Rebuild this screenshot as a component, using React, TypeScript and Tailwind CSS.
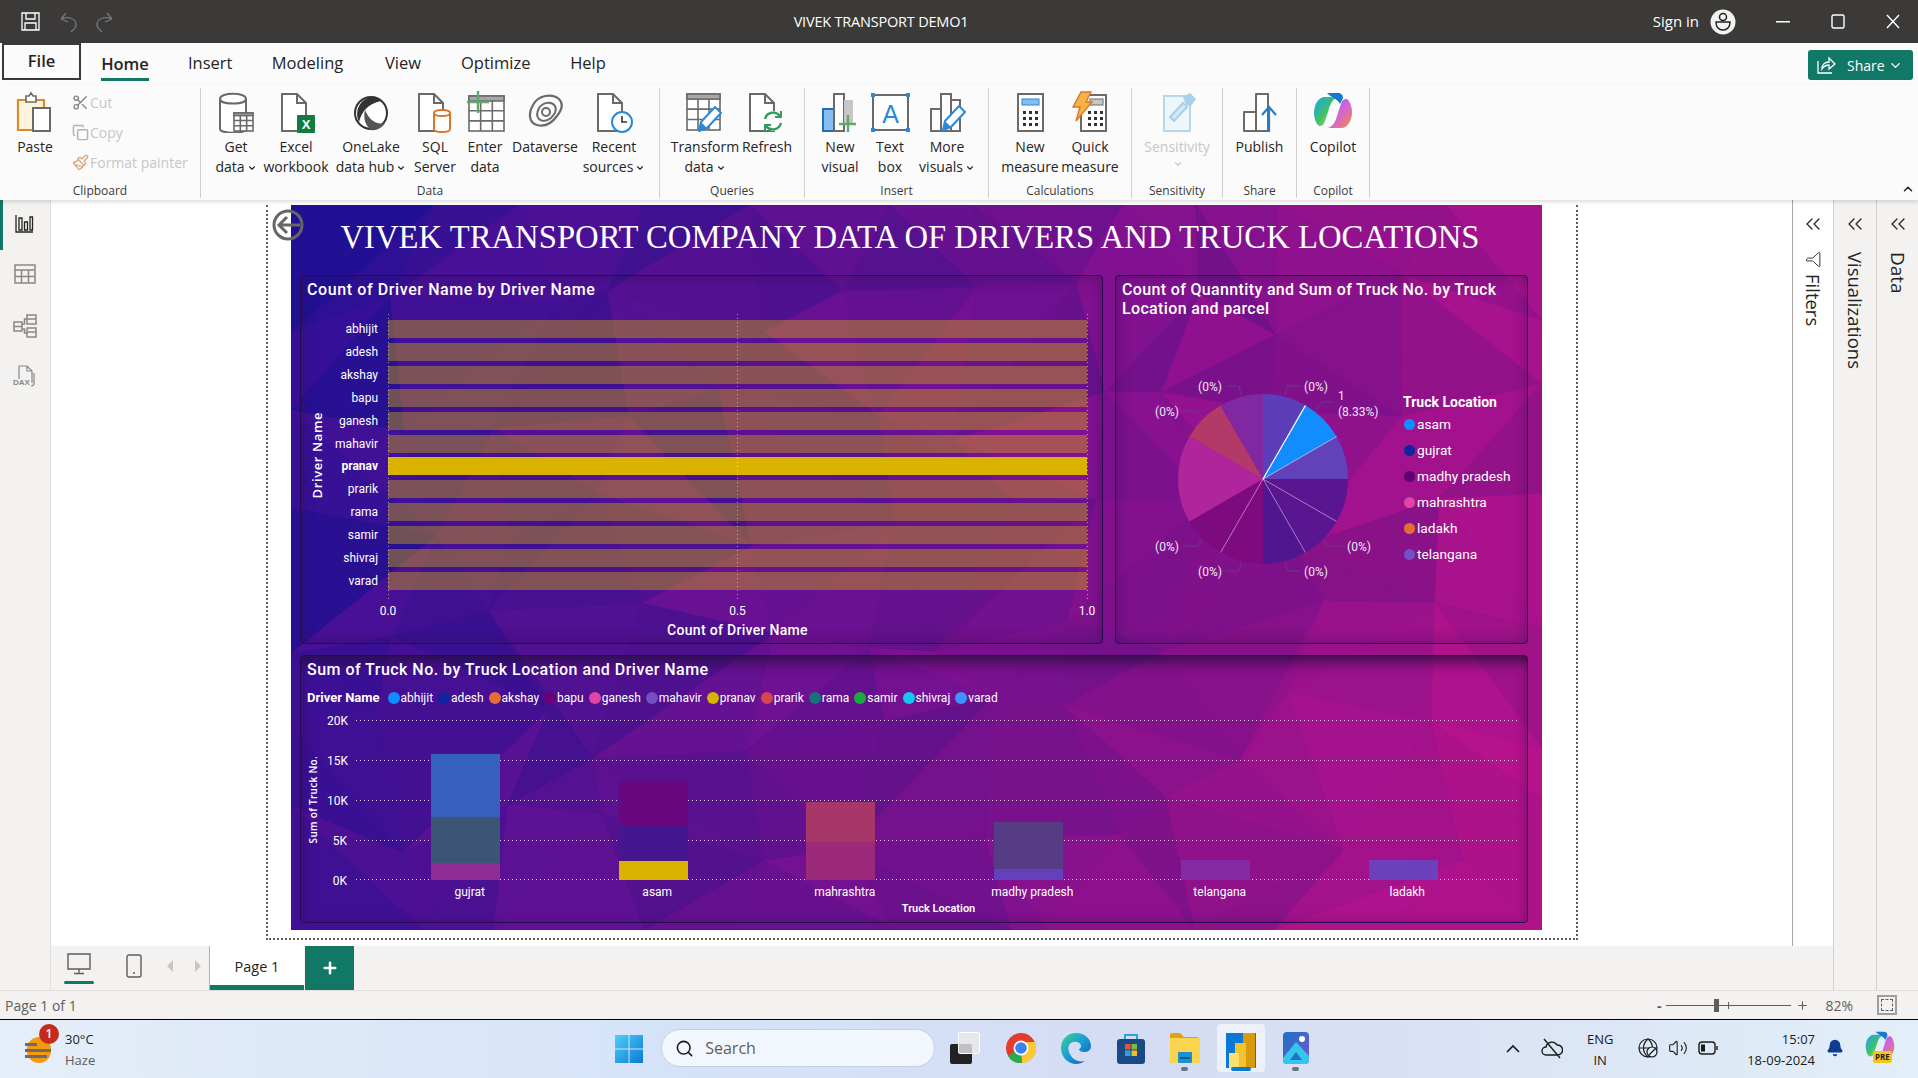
import { ChevronDown, ChevronUp, ChevronsLeft, Funnel, Search, Plus, Volume2, Bell, Scissors, Copy, Paintbrush } from 'lucide-react';
import type { ReactNode } from 'react';

// low poly backdrop of the report page
const W = 1251;
const H = 725;

function rng(seed: number) {
  let a = seed;
  return () => {
    a = (a + 0x6d2b79f5) | 0;
    let t = Math.imul(a ^ (a >>> 15), 1 | a);
    t = (t + Math.imul(t ^ (t >>> 7), 61 | t)) ^ t;
    return ((t ^ (t >>> 14)) >>> 0) / 4294967296;
  };
}

function polyColor(x: number, y: number, n: number) {
  const t = Math.min(1, Math.max(0, (x / W) * 0.85 + (y / H) * 0.15));
  const r = 40 + t * 135 + n * 30;
  const g = 16 + t * 2;
  const b = 150 - t * 14 + n * 6;
  return `rgb(${Math.round(r)},${Math.round(g)},${Math.round(b)})`;
}

function buildPolys() {
  const r = rng(41);
  const cols = 11;
  const rows = 7;
  const pts: [number, number][][] = [];
  for (let j = 0; j <= rows; j++) {
    const row: [number, number][] = [];
    for (let i = 0; i <= cols; i++) {
      const edgeX = i === 0 || i === cols;
      const edgeY = j === 0 || j === rows;
      row.push([
        (i / cols) * W + (edgeX ? 0 : (r() - 0.5) * 85),
        (j / rows) * H + (edgeY ? 0 : (r() - 0.5) * 75),
      ]);
    }
    pts.push(row);
  }
  const out: { p: string; c: string }[] = [];
  for (let j = 0; j < rows; j++) {
    for (let i = 0; i < cols; i++) {
      const a = pts[j][i];
      const b = pts[j][i + 1];
      const c = pts[j + 1][i];
      const d = pts[j + 1][i + 1];
      const tris = r() > 0.5 ? [[a, b, c], [b, d, c]] : [[a, b, d], [a, d, c]];
      for (const t of tris) {
        const cx = (t[0][0] + t[1][0] + t[2][0]) / 3;
        const cy = (t[0][1] + t[1][1] + t[2][1]) / 3;
        out.push({ p: t.map((q) => q.join(',')).join(' '), c: polyColor(cx, cy, r() - 0.5) });
      }
    }
  }
  return out;
}

const polys = buildPolys();

const drivers = ['abhijit', 'adesh', 'akshay', 'bapu', 'ganesh', 'mahavir', 'pranav', 'prarik', 'rama', 'samir', 'shivraj', 'varad'];

const driverLegend = [
  { n: 'abhijit', c: '#118dff' },
  { n: 'adesh', c: '#12239e' },
  { n: 'akshay', c: '#e66c37' },
  { n: 'bapu', c: '#6b007b' },
  { n: 'ganesh', c: '#e044a7' },
  { n: 'mahavir', c: '#744ec2' },
  { n: 'pranav', c: '#d9b300' },
  { n: 'prarik', c: '#d64550' },
  { n: 'rama', c: '#197278' },
  { n: 'samir', c: '#1aab40' },
  { n: 'shivraj', c: '#15c6f4' },
  { n: 'varad', c: '#4092ff' },
];

const truckLegend = [
  { n: 'asam', c: '#118dff' },
  { n: 'gujrat', c: '#12239e' },
  { n: 'madhy pradesh', c: '#5c0072' },
  { n: 'mahrashtra', c: '#e044a7' },
  { n: 'ladakh', c: '#e66c37' },
  { n: 'telangana', c: '#744ec2' },
];

const pieColors = ['#5c3fb8', '#118dff', '#6142bb', '#5a1690', '#5a1690', '#4f1690', '#7e0a80', '#7e0a80', '#b0259b', '#b0259b', '#b33a68', '#8028a2'];

const stacks = [
  { name: 'gujrat', parts: [{ h: 63, c: '#3560bd' }, { h: 46, c: '#3c5575' }, { h: 17, c: '#8f2c96' }] },
  { name: 'asam', parts: [{ h: 44, c: '#680780' }, { h: 36, c: '#45168f' }, { h: 19, c: '#d9b300' }] },
  { name: 'mahrashtra', parts: [{ h: 40, c: '#a73668' }, { h: 38, c: '#9c2a7a' }] },
  { name: 'madhy pradesh', parts: [{ h: 47, c: '#553c85' }, { h: 11, c: '#6540bb' }] },
  { name: 'telangana', parts: [{ h: 20, c: '#842ba3' }] },
  { name: 'ladakh', parts: [{ h: 20, c: '#6d41bc' }] },
];

function slicePath(i: number) {
  const cx = 1263;
  const cy = 480;
  const r = 85;
  const a0 = (i * 30 * Math.PI) / 180;
  const a1 = ((i + 1) * 30 * Math.PI) / 180;
  return `M${cx} ${cy} L${cx + r * Math.sin(a0)} ${cy - r * Math.cos(a0)} A${r} ${r} 0 0 1 ${cx + r * Math.sin(a1)} ${cy - r * Math.cos(a1)} Z`;
}

function spoke(deg: number) {
  const a = (deg * Math.PI) / 180;
  return { x2: 1263 + 85 * Math.sin(a), y2: 480 - 85 * Math.cos(a) };
}

/* ---------- ribbon icons ---------- */
const G = '#6b6a69';

function Ico({ children, w = 40 }: { children: ReactNode; w?: number }) {
  return (
    <svg width={w} height="42" viewBox={`0 0 ${w} 42`} fill="none">
      {children}
    </svg>
  );
}

const Doc = ({ x = 8 }: { x?: number }) => (
  <path d={`M${x} 3h15l9 9v28h-24zM${x + 15} 3v9h9`} stroke={G} strokeWidth="2" fill="#fff" />
);

const TableGrid = ({ x, y, w, h, head = true }: { x: number; y: number; w: number; h: number; head?: boolean }) => (
  <g stroke={G} strokeWidth="1.6" fill="#fff">
    <rect x={x} y={y} width={w} height={h} />
    {head && <rect x={x} y={y} width={w} height={h / 7} fill="#a8a7a6" />}
    <path d={`M${x + w / 3} ${y + h / 7}V${y + h}M${x + (2 * w) / 3} ${y + h / 7}V${y + h}M${x} ${y + h * 0.42}H${x + w}M${x} ${y + h * 0.71}H${x + w}`} />
  </g>
);

const Pencil = ({ dx = 0, dy = 0 }: { dx?: number; dy?: number }) => (
  <g transform={`translate(${dx} ${dy})`}>
    <path d="M14 38l2-9L30 14l6 6L22 35z" fill="#fff" stroke="#2b88d8" strokeWidth="2" strokeLinejoin="round" />
    <path d="M14 38l2-9 6 6z" fill="#2b88d8" />
  </g>
);

const icons: Record<string, ReactNode> = {
  paste: (
    <Ico>
      <path d="M3 9h26v30H3z" fill="#fdf3dc" stroke="#d98a2b" strokeWidth="2.2" />
      <path d="M11 5h3l2-3 2 3h3v6H11z" fill="#fff" stroke={G} strokeWidth="1.6" />
      <rect x="18" y="17" width="17" height="23" fill="#fff" stroke={G} strokeWidth="2" />
    </Ico>
  ),
  get: (
    <Ico>
      <path d="M4 8c0-7 26-7 26 0v30c0 5-26 5-26 0z" fill="#fff" stroke={G} strokeWidth="2" />
      <path d="M4 8c0 6 26 6 26 0" stroke={G} strokeWidth="2" />
      <TableGrid x={18} y={22} w={19} h={18} />
    </Ico>
  ),
  excel: (
    <Ico>
      <Doc x={6} />
      <rect x="21" y="24" width="18" height="18" rx="1" fill="#107c41" />
      <text x="30" y="38" fontSize="13" fontWeight="700" fill="#fff" textAnchor="middle" fontFamily="Liberation Sans">X</text>
    </Ico>
  ),
  onelake: (
    <Ico>
      <circle cx="20" cy="22" r="16" fill="#fff" stroke="#333" strokeWidth="2" />
      <path d="M20 6C9 8 3 20 8 31c3-11 9-18 22-21C27 6 24 5 20 6z" fill="#333" />
      <path d="M14 19c4 9 10 15 20 13-3 5-9 8-14 7-6-5-8-12-6-20z" fill="#555" />
    </Ico>
  ),
  sql: (
    <Ico>
      <Doc x={4} />
      <path d="M19 22c0-4 16-4 16 0v16c0 4-16 4-16 0z" fill="#fff" stroke="#d9782b" strokeWidth="2" />
      <path d="M19 22c0 4 16 4 16 0" stroke="#d9782b" strokeWidth="2" />
    </Ico>
  ),
  enter: (
    <Ico>
      <TableGrid x={4} y={5} w={35} h={35} />
      <path d="M13 0v22M2 11h22" stroke="#5fa86b" strokeWidth="2.4" />
    </Ico>
  ),
  dataverse: (
    <Ico>
      <path d="M8 14c5-10 19-12 26-6 5 5 2 12-2 17-5 7-12 11-20 9C4 32 3 22 8 14z" stroke={G} strokeWidth="2.2" />
      <path d="M14 17c4-6 13-7 16-2 2 4-1 9-4 12-4 3-9 4-12 1-3-3-2-7 0-11z" stroke={G} strokeWidth="2" />
      <circle cx="21" cy="21" r="4" stroke={G} strokeWidth="2" />
    </Ico>
  ),
  recent: (
    <Ico>
      <Doc x={4} />
      <circle cx="28" cy="31" r="10" fill="#fff" stroke="#2b88d8" strokeWidth="2" />
      <path d="M28 25v6h5" stroke="#333" strokeWidth="1.6" />
    </Ico>
  ),
  transform: (
    <Ico>
      <TableGrid x={2} y={3} w={33} h={36} />
      <Pencil dx={0} dy={2} />
    </Ico>
  ),
  refresh: (
    <Ico>
      <Doc x={3} />
      <circle cx="26" cy="30" r="10" fill="#fff" />
      <path d="M18 28a8.500 8.500 0 0 1 15-3M34 32a8.500 8.500 0 0 1-15 3" stroke="#2e9e5b" strokeWidth="2.4" />
      <path d="M34 20v6h-6M18 40v-6h6" stroke="#2e9e5b" strokeWidth="2" />
    </Ico>
  ),
  newvisual: (
    <Ico>
      <rect x="3" y="18" width="11" height="22" fill="#86bdf0" stroke="#1f6fb5" strokeWidth="2" />
      <rect x="14" y="3" width="10" height="37" fill="#fff" stroke={G} strokeWidth="2" />
      <rect x="24" y="9" width="9" height="23" fill="#c8c7c6" />
      <path d="M28 24v17M19 33h17" stroke="#5fa86b" strokeWidth="2.4" />
    </Ico>
  ),
  textbox: (
    <Ico>
      <rect x="3" y="4" width="35" height="35" stroke={G} strokeWidth="2" fill="#fff" />
      <path d="M1 2h4v4H1zM36 2h4v4h-4zM1 37h4v4H1zM36 37h4v4h-4z" fill="#2b88d8" />
      <text x="20.500" y="32" fontSize="25" fill="#2b88d8" textAnchor="middle" fontFamily="Liberation Sans">A</text>
    </Ico>
  ),
  more: (
    <Ico>
      <rect x="4" y="18" width="10" height="22" fill="#fff" stroke={G} strokeWidth="2" />
      <rect x="14" y="3" width="10" height="37" fill="#fff" stroke={G} strokeWidth="2" />
      <rect x="24" y="9" width="9" height="31" fill="#fff" stroke={G} strokeWidth="2" />
      <Pencil dx={2} dy={1} />
    </Ico>
  ),
  measure: (
    <Ico>
      <rect x="8" y="3" width="25" height="37" fill="#fff" stroke={G} strokeWidth="2" />
      <rect x="12" y="8" width="17" height="6" fill="#86bdf0" stroke="#2b88d8" />
      <path d="M13 20h3v3h-3zM19 20h3v3h-3zM25 20h3v3h-3zM13 26h3v3h-3zM19 26h3v3h-3zM25 26h3v3h-3zM13 32h3v3h-3zM19 32h3v3h-3zM25 32h3v3h-3z" fill="#333" />
    </Ico>
  ),
  quick: (
    <Ico>
      <rect x="11" y="4" width="25" height="36" fill="#fff" stroke={G} strokeWidth="2" />
      <rect x="20" y="8" width="13" height="6" fill="#c8c7c6" stroke={G} />
      <path d="M18 20h3v3h-3zM24 20h3v3h-3zM30 20h3v3h-3zM18 26h3v3h-3zM24 26h3v3h-3zM30 26h3v3h-3zM18 32h3v3h-3zM24 32h3v3h-3zM30 32h3v3h-3z" fill="#333" />
      <path d="M11 1h10l-5 10h6L6 30l4-14H3z" fill="#f5b342" stroke="#d9782b" strokeWidth="1.4" />
    </Ico>
  ),
  sensitivity: (
    <Ico>
      <rect x="7" y="5" width="26" height="35" fill="#eef6fb" stroke="#b5d7ec" strokeWidth="2" />
      <path d="M13 26L26 12l4 4-13 14z" fill="#d4e8f5" stroke="#a9d0ea" strokeWidth="2" />
      <path d="M26 6l7-4 6 6-5 7-5-1z" fill="#a9d0ea" />
    </Ico>
  ),
  publish: (
    <Ico>
      <path d="M16 3h12v37H16zM4 21h12v19H4z" fill="#fff" stroke={G} strokeWidth="2" strokeLinejoin="round" />
      <path d="M29 18v23M22 24l7-8 7 8" stroke="#2b7cb8" strokeWidth="2.2" />
    </Ico>
  ),
  copilot: <Copilot size={40} />,
};

function Copilot({ size }: { size: number }) {
  return (
    <svg width={size} height={size} viewBox="0 0 40 40" fill="none">
      <defs>
        <linearGradient id={`cpa${size}`} x1="0" y1="0" x2="1" y2="1">
          <stop offset="0" stopColor="#1fa2f0" />
          <stop offset="0.5" stopColor="#3bc26b" />
          <stop offset="1" stopColor="#f4d23a" />
        </linearGradient>
        <linearGradient id={`cpb${size}`} x1="0" y1="0" x2="1" y2="1">
          <stop offset="0" stopColor="#8a5be8" />
          <stop offset="0.5" stopColor="#d264d8" />
          <stop offset="1" stopColor="#f58a3c" />
        </linearGradient>
      </defs>
      <path d="M12 5h13c-6 2-8 8-10 15l-3 9c-1 4-3 5-6 5-3-2-5-8-5-13C1 13 5 5 12 5z" fill={`url(#cpa${size})`} />
      <path d="M28 36H15c6-2 8-8 10-15l3-9c1-4 3-5 6-5 3 2 5 8 5 13 0 8-4 16-11 16z" fill={`url(#cpb${size})`} />
      <path d="M14 1h11c3 0 5 2 5 5l-3 6c-2-5-8-6-13-11z" fill="#1478d4" />
    </svg>
  );
}

function RibbonBtn({ w, icon, lines, chevron, muted }: { w: string; icon: string; lines: string[]; chevron?: boolean; muted?: boolean }) {
  return (
    <div className={`${w} shrink-0 flex flex-col items-center`}>
      <div className="h-[42px] flex items-center justify-center">{icons[icon]}</div>
      <div className={`mt-[4px] text-center whitespace-nowrap leading-[20px] ${muted ? 'text-[#c8c6c4]' : 'text-[#252423]'}`}>
        <div>{lines[0]}</div>
        {(lines[1] || chevron) && (
          <div className="flex items-center justify-center">
            {lines[1]}
            {chevron && <ChevronDown size={10} strokeWidth={2.6} className="ml-[2px] mt-[2px]" />}
          </div>
        )}
      </div>
    </div>
  );
}

function Group({ w, label, children, pad }: { w: string; label: string; children: ReactNode; pad?: string }) {
  return (
    <div className={`${w} shrink-0 h-[110px] border-r border-[#d2d0ce] flex flex-col`}>
      <div className={`flex-1 flex pt-[3px] ${pad ?? ''}`}>{children}</div>
      <div className="h-[16px] leading-[16px] text-center text-[12px] text-[#3b3a39] mb-[-1px]">{label}</div>
    </div>
  );
}

function SmallAction({ icon, text }: { icon: ReactNode; text: string }) {
  return (
    <div className="h-[30px] flex items-center text-[#c8c6c4] whitespace-nowrap">
      <span className="w-[20px] flex justify-center">{icon}</span>
      {text}
    </div>
  );
}

/* ---------- taskbar icons ---------- */
function WinLogo() {
  return (
    <svg width="30" height="30" viewBox="0 0 30 30">
      <defs>
        <linearGradient id="wl" x1="0" y1="0" x2="1" y2="1">
          <stop offset="0" stopColor="#4fd0f8" />
          <stop offset="1" stopColor="#0a78d6" />
        </linearGradient>
      </defs>
      <path d="M1 1h13.500v13.500H1zM15.500 1H29v13.500H15.500zM1 15.500h13.500V29H1zM15.500 15.500H29V29H15.500z" fill="url(#wl)" />
    </svg>
  );
}

function Chrome() {
  return (
    <svg width="30" height="32" viewBox="0 0 30 32">
      <circle cx="15" cy="16" r="15" fill="#e33b2e" />
      <path d="M15 16L2 24a15 15 0 0 0 14 7z" fill="#2da94f" />
      <path d="M15 16l1 15A15 15 0 0 0 29 10H15z" fill="#fcc934" />
      <circle cx="15" cy="16" r="7.500" fill="#fff" />
      <circle cx="15" cy="16" r="5.800" fill="#3b82f0" />
    </svg>
  );
}

function Edge() {
  return (
    <svg width="30" height="32" viewBox="0 0 30 32">
      <defs>
        <linearGradient id="ed" x1="0" y1="0" x2="1" y2="1">
          <stop offset="0" stopColor="#38d68a" />
          <stop offset="0.5" stopColor="#1a9bd8" />
          <stop offset="1" stopColor="#0c59a4" />
        </linearGradient>
      </defs>
      <path d="M15 1c9 0 15 6 15 13 0 4-3 6-7 6-3 0-5-1-5-3 3-1 3-6-2-7C9 9 6 14 8 20c2 6 8 11 16 9-3 2-6 3-9 3C7 32 0 25 0 16 0 7 7 1 15 1z" fill="url(#ed)" />
    </svg>
  );
}

function Store() {
  return (
    <svg width="30" height="32" viewBox="0 0 30 32">
      <path d="M9 8V3h12v5" stroke="#2ca3dd" strokeWidth="2" fill="none" />
      <rect x="1" y="7" width="28" height="25" rx="3" fill="#1a4a86" />
      <path d="M9 12h5.500v5.500H9z" fill="#e8542f" />
      <path d="M15.500 12H21v5.500h-5.500z" fill="#7fba3a" />
      <path d="M9 18.500h5.500V24H9z" fill="#2ca3dd" />
      <path d="M15.500 18.500H21V24h-5.500z" fill="#f5b82e" />
    </svg>
  );
}

function Folder() {
  return (
    <svg width="30" height="32" viewBox="0 0 30 32">
      <path d="M0 3a2 2 0 0 1 2-2h8l4 4h14v6H0z" fill="#e0a20e" />
      <path d="M0 6h30v24a1 1 0 0 1-1 1H1a1 1 0 0 1-1-1z" fill="#fbd44f" />
      <rect x="8" y="20" width="14" height="11" rx="1" fill="#1a8fd1" />
      <rect x="10" y="25" width="10" height="2" fill="#0d5f93" />
    </svg>
  );
}

function PowerBi() {
  return (
    <svg width="30" height="36" viewBox="0 0 30 36">
      <rect x="0" y="0" width="30" height="35" fill="#0a78d6" />
      <rect x="17" y="0" width="12" height="35" fill="#d99a0b" />
      <rect x="9" y="10" width="11" height="25" fill="#f2c230" />
      <rect x="3" y="20" width="10" height="15" fill="#fae06e" />
    </svg>
  );
}

function Photos() {
  return (
    <svg width="26" height="32" viewBox="0 0 26 32">
      <defs>
        <linearGradient id="ph" x1="0" y1="0" x2="1" y2="1">
          <stop offset="0" stopColor="#1a72c9" />
          <stop offset="1" stopColor="#7b55c7" />
        </linearGradient>
      </defs>
      <rect width="26" height="32" rx="4" fill="url(#ph)" />
      <circle cx="19" cy="7" r="3" fill="#fff" />
      <path d="M0 26L13 10l13 14v4a4 4 0 0 1-4 4H4a4 4 0 0 1-4-4z" fill="#35c6ee" />
      <path d="M7 28l6-8 6 8z" fill="#1a72c9" />
    </svg>
  );
}

function TrayDot({ blue }: { blue?: boolean }) {
  return <span className={`block h-[4px] rounded-sm ${blue ? 'bg-[#0a78d6] w-[20px]' : 'bg-[#6b7280] w-[7px]'}`} />;
}

const dotV = 'bg-[repeating-linear-gradient(0deg,rgba(255,255,255,0.55)_0_1px,transparent_1px_4px)]';

function Panel({ className, children }: { className: string; children: ReactNode }) {
  return (
    <div className={`${className} rounded-[4px] border border-[#2a0a4e] shadow-[inset_0_0_14px_rgba(45,15,70,0.45)] font-['Roboto',sans-serif] text-white`}>
      {children}
    </div>
  );
}

export default function App() {
  return (
    <div className="w-[1918px] h-[1078px] overflow-hidden flex flex-col bg-white font-['Open_Sans',sans-serif] text-[14px] text-[#252423]">
      {/* title bar */}
      <div className="h-[43px] shrink-0 bg-[#3b3a39] flex items-center text-white relative">
        <svg className="ml-[21px]" width="19" height="19" viewBox="0 0 19 19" fill="none" stroke="#fff" strokeWidth="1.3">
          <path d="M1 1h17v17H1zM5 1v6h9V1M4 18v-7h11v7" />
        </svg>
        <svg className="ml-[19px]" width="19" height="22" viewBox="0 0 19 22" fill="none" stroke="#77767a" strokeWidth="1.3">
          <path d="M2 8l5-6M2 8l7 3M2 8c7-3 15-1 15 6 0 3-3 5-5 7" />
        </svg>
        <svg className="ml-[17px]" width="19" height="22" viewBox="0 0 19 22" fill="none" stroke="#77767a" strokeWidth="1.3">
          <path d="M17 8l-5-6M17 8l-7 3M17 8C10 5 2 7 2 14c0 3 3 5 5 7" />
        </svg>
        <div className="absolute left-[792px] w-[178px] text-center text-[14.5px] tracking-[-0.2px] whitespace-nowrap">VIVEK TRANSPORT DEMO1</div>
        <div className="ml-auto text-[15px]">Sign in</div>
        <svg className="ml-[11px]" width="26" height="26" viewBox="0 0 26 26">
          <circle cx="13" cy="13" r="12.500" fill="#f3f2f1" />
          <circle cx="13" cy="8" r="3.500" fill="none" stroke="#222" strokeWidth="1.5" />
          <path d="M6 13h14c0 5-3 8-7 8s-7-3-7-8z" fill="none" stroke="#222" strokeWidth="1.5" />
        </svg>
        <svg className="ml-[40px]" width="14" height="2" viewBox="0 0 14 2"><rect width="14" height="1.500" fill="#fff" /></svg>
        <svg className="ml-[41px]" width="14" height="15" viewBox="0 0 14 15" fill="none" stroke="#fff" strokeWidth="1.4"><rect x="1" y="1" width="12" height="13" rx="1.500" /></svg>
        <svg className="ml-[41px] mr-[18px]" width="14" height="15" viewBox="0 0 14 15" fill="none" stroke="#fff" strokeWidth="1.4"><path d="M1 1l12 13M13 1L1 14" /></svg>
      </div>

      {/* tabs */}
      <div className="h-[42px] shrink-0 bg-[#fbfbfb] flex items-center text-[16.500px]">
        <div className="ml-[2px] w-[79px] h-[37px] mb-[5px] border-2 border-[#3b3a39] flex items-center justify-center font-semibold text-[#252423]">File</div>
        <div className="ml-[20px] w-[48px] h-full flex items-center justify-center relative font-semibold">
          Home
          <span className="absolute left-0 right-0 bottom-[4px] h-[3px] bg-[#117865]" />
        </div>
        <div className="ml-[39px] w-[43px] text-center whitespace-nowrap mb-[1px]">Insert</div>
        <div className="ml-[40px] w-[73px] text-center whitespace-nowrap mb-[1px]">Modeling</div>
        <div className="ml-[41px] w-[36px] text-center whitespace-nowrap mb-[1px]">View</div>
        <div className="ml-[40px] w-[69px] text-center whitespace-nowrap mb-[1px]">Optimize</div>
        <div className="ml-[40px] w-[36px] text-center whitespace-nowrap mb-[1px]">Help</div>
        <div className="ml-auto mr-[5px] mt-[2px] w-[105px] h-[30px] rounded-[3px] bg-[#117865] text-white text-[14px] flex items-center pl-[9px]">
          <svg width="20" height="18" viewBox="0 0 20 18" fill="none" stroke="#fff" strokeWidth="1.3">
            <path d="M1 5v12h14M5 13c0-5 3-7 7-7V2l6 6-6 5V9c-3 0-5 1-7 4z" />
          </svg>
          <span className="ml-[10px]">Share</span>
          <ChevronDown size={15} className="ml-[3px]" />
        </div>
      </div>

      {/* ribbon */}
      <div className="h-[115px] shrink-0 bg-[#fbfbfb] flex pt-[3px] relative z-20 shadow-[0_2px_4px_rgba(0,0,0,0.14)]">
        <Group w="w-[201px]" label="Clipboard">
          <RibbonBtn w="w-[70px]" icon="paste" lines={['Paste']} />
          <div className="-mt-[4px]">
            <SmallAction icon={<Scissors size={17} color="#8a8886" />} text="Cut" />
            <SmallAction icon={<Copy size={17} color="#b3b0ad" />} text="Copy" />
            <SmallAction icon={<Paintbrush size={17} color="#d9a97c" />} text="Format painter" />
          </div>
        </Group>
        <Group w="w-[459px]" label="Data" pad="pl-[5px]">
          <RibbonBtn w="w-[60px]" icon="get" lines={['Get', 'data']} chevron />
          <RibbonBtn w="w-[60px]" icon="excel" lines={['Excel', 'workbook']} />
          <RibbonBtn w="w-[90px]" icon="onelake" lines={['OneLake', 'data hub']} chevron />
          <RibbonBtn w="w-[38px]" icon="sql" lines={['SQL', 'Server']} />
          <RibbonBtn w="w-[62px]" icon="enter" lines={['Enter', 'data']} />
          <RibbonBtn w="w-[58px]" icon="dataverse" lines={['Dataverse']} />
          <RibbonBtn w="w-[80px]" icon="recent" lines={['Recent', 'sources']} chevron />
        </Group>
        <Group w="w-[145px]" label="Queries">
          <RibbonBtn w="w-[90px]" icon="transform" lines={['Transform', 'data']} chevron />
          <RibbonBtn w="w-[34px]" icon="refresh" lines={['Refresh']} />
        </Group>
        <Group w="w-[184px]" label="Insert" pad="pl-[10px]">
          <RibbonBtn w="w-[50px]" icon="newvisual" lines={['New', 'visual']} />
          <RibbonBtn w="w-[50px]" icon="textbox" lines={['Text', 'box']} />
          <RibbonBtn w="w-[64px]" icon="more" lines={['More', 'visuals']} chevron />
        </Group>
        <Group w="w-[143px]" label="Calculations" pad="pl-[11px]">
          <RibbonBtn w="w-[60px]" icon="measure" lines={['New', 'measure']} />
          <RibbonBtn w="w-[60px]" icon="quick" lines={['Quick', 'measure']} />
        </Group>
        <Group w="w-[91px]" label="Sensitivity">
          <RibbonBtn w="w-full" icon="sensitivity" lines={['Sensitivity']} chevron muted />
        </Group>
        <Group w="w-[74px]" label="Share">
          <RibbonBtn w="w-full" icon="publish" lines={['Publish']} />
        </Group>
        <Group w="w-[73px]" label="Copilot">
          <RibbonBtn w="w-full" icon="copilot" lines={['Copilot']} />
        </Group>
        <ChevronUp size={14} strokeWidth={2.6} className="absolute right-[3px] bottom-[4px]" />
      </div>

      {/* middle */}
      <div className="h-[790px] shrink-0 flex">
        <div className="w-[51px] shrink-0 bg-[#f3f2f1] border-r border-[#e1dfdd] relative flex flex-col items-center">
          <span className="absolute left-0 top-0 w-[3px] h-[50px] bg-[#117865]" />
          <svg className="mt-[14px]" width="20" height="20" viewBox="0 0 20 20" fill="none" stroke="#252423" strokeWidth="1.3">
            <path d="M1 1v17h17M4 4h3v12H4zM9.500 8h3v8h-3zM15 3h2.500v13H15z" />
          </svg>
          <svg className="mt-[30px]" width="22" height="20" viewBox="0 0 22 20" fill="none" stroke="#8a8886" strokeWidth="1.5">
            <path d="M1 1h20v18H1zM1 6h20M1 12.500h20M7.500 6v13M14.500 6v13" />
          </svg>
          <svg className="mt-[30px]" width="24" height="24" viewBox="0 0 24 24" fill="none" stroke="#8a8886" strokeWidth="1.5">
            <path d="M1 8h8v9H1zM1 12.500h8M14 1h9v9h-9zM14 5h9M14 14h9v9h-9zM14 18h9M9 10h2.500V5H14M9 15h2.500v4H14" />
          </svg>
          <svg className="mt-[27px]" width="24" height="22" viewBox="0 0 24 22" fill="none" stroke="#8a8886" strokeWidth="1.2">
            <path d="M6 14V1h8l5 5v12M14 1v5h5" />
            <path d="M21 8v10c0 2-1 3-3 3" />
            <text x="0" y="20" fontSize="8" fontWeight="700" fill="#8a8886" stroke="none" fontFamily="Liberation Sans">DAX</text>
          </svg>
        </div>

        <div className="flex-1 flex flex-col min-w-0">
          <div className="h-[746px] flex">
            {/* canvas */}
            <div className="flex-1 min-w-0 bg-white">
              <div className="ml-[215px] w-[1312px] h-[735px] border-2 border-t-0 border-dotted border-[#605e5c] relative">
                <svg className="absolute left-[4px] top-[4px] z-10" width="32" height="32" viewBox="0 0 32 32" fill="none" stroke="#666" strokeWidth="3">
                  <circle cx="16" cy="16" r="14" fill="none" />
                  <path d="M28 16H7M15 8l-8 8 8 8" />
                </svg>
                <div className="ml-[23px] mt-[5px] w-[1251px] h-[725px] relative overflow-hidden bg-[#70108f]">
                  <svg className="absolute inset-0" width={W} height={H} viewBox={`0 0 ${W} ${H}`}>
                    {polys.map((t, i) => (
                      <polygon key={i} points={t.p} fill={t.c} stroke={t.c} strokeWidth="0.6" />
                    ))}
                  </svg>
                  <div className="relative flex flex-col px-[9px]">
                    <div className="h-[70px] pb-[4px] pr-[13px] flex items-center justify-center font-['Liberation_Serif',serif] text-[32.700px] text-white whitespace-nowrap">
                      VIVEK TRANSPORT COMPANY DATA OF DRIVERS AND TRUCK LOCATIONS
                    </div>
                    <div className="flex gap-[12px]">
                      {/* bar chart */}
                      <Panel className="w-[803px] h-[369px] flex flex-col">
                        <div className="mt-[4px] ml-[6px] h-[20px] leading-[20px] text-[16px] font-medium tracking-[0.6px]">Count of Driver Name by Driver Name</div>
                        <div className="mt-[11px] flex h-[288px]">
                          <div className="w-[28px] flex items-center justify-center">
                            <span className="[writing-mode:vertical-rl] rotate-180 text-[13px] font-semibold tracking-[0.6px] font-['Open_Sans',sans-serif] whitespace-nowrap pr-[5px]">Driver Name</span>
                          </div>
                          <div className="w-[758px] relative py-[9px] flex flex-col justify-between">
                            {drivers.map((d) => (
                              <div key={d} className="flex items-center h-[18px]">
                                <span className={`w-[49px] text-right text-[12px] leading-none ${d === 'pranav' ? 'font-bold' : ''}`}>{d}</span>
                                <div className={`ml-[10px] w-[699px] h-[18px] ${d === 'pranav' ? 'bg-[#d9b300]' : 'bg-[#d9b300]/40'}`} />
                              </div>
                            ))}
                            <span className={`absolute top-0 bottom-0 left-[59px] w-px ${dotV}`} />
                            <span className={`absolute top-0 bottom-0 left-[408px] w-px ${dotV}`} />
                            <span className={`absolute top-0 bottom-0 left-[758px] w-px ${dotV}`} />
                          </div>
                        </div>
                        <div className="mt-[3px] ml-[75px] w-[723px] flex justify-between text-[12px] leading-[18px] text-center">
                          <span className="w-[24px]">0.0</span>
                          <span className="w-[24px]">0.5</span>
                          <span className="w-[24px]">1.0</span>
                        </div>
                        <div className="ml-[75px] w-[723px] text-center text-[14px] font-medium tracking-[0.3px] leading-[20px]">Count of Driver Name</div>
                      </Panel>

                      {/* pie chart */}
                      <Panel className="w-[413px] h-[369px] flex flex-col">
                        <div className="mt-[4px] ml-[6px] w-[395px] text-[16px] font-medium leading-[19px] tracking-[0.35px]">Count of Quanntity and Sum of Truck No. by Truck Location and parcel</div>
                        <div className="mt-[51px] ml-[14px] flex">
                          <svg width="270" height="220" viewBox="1130 370 270 220" className="shrink-0">
                            {pieColors.map((c, i) => (
                              <path key={i} d={slicePath(i)} fill={c} />
                            ))}
                            <line x1="1263" y1="480" {...spoke(30)} stroke="#fff" strokeWidth="1.2" />
                            <line x1="1263" y1="480" {...spoke(60)} stroke="#fff" strokeOpacity="0.55" />
                            <line x1="1263" y1="480" {...spoke(120)} stroke="#fff" strokeOpacity="0.45" />
                            <line x1="1263" y1="480" {...spoke(150)} stroke="#fff" strokeOpacity="0.45" />
                            <line x1="1263" y1="480" {...spoke(210)} stroke="#fff" strokeOpacity="0.45" />
                            <g fill="none" stroke="#6a3a86" strokeWidth="1">
                              <path d="M1300 387h-13l-2 9M1226 387h13l2 9M1183 412h14l5 6M1334 403h-12l-7 8M1343 547h-16l-3-5M1300 572h-12l-3-8M1226 572h13l2-8M1183 547h14l5-5" />
                            </g>
                            <g fill="#f0e6f4" fontSize="12" fontFamily="Roboto" textAnchor="middle">
                              <text x="1316" y="392">(0%)</text>
                              <text x="1210" y="392">(0%)</text>
                              <text x="1167" y="417">(0%)</text>
                              <text x="1167" y="552">(0%)</text>
                              <text x="1210" y="577">(0%)</text>
                              <text x="1316" y="577">(0%)</text>
                              <text x="1359" y="552">(0%)</text>
                              <text x="1338" y="401" textAnchor="start">1</text>
                              <text x="1338" y="417" textAnchor="start">(8.33%)</text>
                            </g>
                          </svg>
                          <div className="ml-[3px] mt-[24px]">
                            <div className="h-[18px] leading-[18px] text-[14px] font-bold">Truck Location</div>
                            {truckLegend.map((t) => (
                              <div key={t.n} className="h-[26px] flex items-center text-[13.700px] whitespace-nowrap">
                                <span className="ml-[1px] w-[11px] h-[11px] rounded-full mr-[2px] shrink-0" style={{ backgroundColor: t.c }} />
                                {t.n}
                              </div>
                            ))}
                          </div>
                        </div>
                      </Panel>
                    </div>

                    {/* stacked chart */}
                    <Panel className="mt-[11px] w-[1228px] h-[268px] flex flex-col shadow-[inset_0_14px_14px_-8px_rgba(40,15,60,0.75),inset_0_0_12px_rgba(45,15,70,0.35)]">
                      <div className="mt-[4px] ml-[6px] h-[20px] leading-[20px] text-[16px] font-medium tracking-[0.47px]">Sum of Truck No. by Truck Location and Driver Name</div>
                      <div className="mt-[9px] ml-[6px] h-[18px] flex items-center text-[12px] whitespace-nowrap">
                        <span className="text-[13px] font-bold mr-[8px]">Driver Name</span>
                        {driverLegend.map((d) => (
                          <span key={d.n} className="flex items-center mr-[5px]">
                            <span className="w-[12px] h-[12px] rounded-full mr-[1px]" style={{ backgroundColor: d.c }} />
                            {d.n}
                          </span>
                        ))}
                      </div>
                      <div className="mt-[13px] flex h-[160px]">
                        <div className="w-[26px] flex items-center justify-center">
                          <span className="[writing-mode:vertical-rl] rotate-180 text-[10px] font-semibold tracking-[0.3px] font-['Open_Sans',sans-serif] whitespace-nowrap pl-[2px]">Sum of Truck No.</span>
                        </div>
                        <div className="w-[20px] h-[170px] -mt-[4px] flex flex-col justify-between text-[12px] leading-[10px] text-right shrink-0">
                          <span>20K</span>
                          <span>15K</span>
                          <span>10K</span>
                          <span>5K</span>
                          <span>0K</span>
                        </div>
                        <div className="ml-[9px] w-[1162px] relative">
                          {[0, 40, 80, 120, 159].map((y) => (
                            <span
                              key={y}
                              className="absolute left-0 right-0 h-px bg-[repeating-linear-gradient(90deg,rgba(255,255,255,0.8)_0_1px,transparent_1px_4px)]"
                              style={{ top: y }}
                            />
                          ))}
                          <div className="absolute inset-0 pl-[16px] pr-[21px] grid grid-cols-6 items-end">
                            {stacks.map((s) => (
                              <div key={s.name} className="flex flex-col w-[69px] mx-auto">
                                {s.parts.map((p, i) => (
                                  <div key={i} style={{ height: p.h, backgroundColor: p.c }} />
                                ))}
                              </div>
                            ))}
                          </div>
                        </div>
                      </div>
                      <div className="ml-[75px] w-[1125px] grid grid-cols-6 text-[12px] leading-[18px] text-center mt-[3px]">
                        {stacks.map((s) => (
                          <span key={s.name}>{s.name}</span>
                        ))}
                      </div>
                      <div className="ml-[75px] w-[1125px] text-center text-[11px] font-semibold leading-[16px]">Truck Location</div>
                    </Panel>
                  </div>
                </div>
              </div>
            </div>

            {/* filters strip */}
            <div className="w-[41px] shrink-0 bg-white border-l border-[#a8a7a6] flex flex-col items-center">
              <ChevronsLeft size={24} strokeWidth={1.3} className="mt-[12px]" />
              <Funnel size={17} strokeWidth={1.3} className="mt-[15px] rotate-90" />
              <span className="mt-[6px] [writing-mode:vertical-rl] text-[18.500px] font-medium text-[#252423] ml-[1px]">Filters</span>
            </div>
          </div>

          {/* page tabs */}
          <div className="h-[44px] shrink-0 bg-[#f3f2f1] flex">
            <div className="w-[159px] shrink-0 border-r border-[#b3b0ad] relative flex items-center">
              <svg className="ml-[16px] mb-[8px]" width="24" height="22" viewBox="0 0 24 22" fill="none" stroke="#605e5c" strokeWidth="1.4">
                <path d="M1 1h22v15H1zM12 16v4M7 20.500h10" />
              </svg>
              <svg className="ml-[35px] mb-[4px]" width="16" height="24" viewBox="0 0 16 24" fill="none" stroke="#605e5c" strokeWidth="1.4">
                <rect x="1" y="1" width="14" height="22" rx="2" />
                <path d="M7 19h2" />
              </svg>
              <span className="ml-[25px] mb-[4px] w-0 h-0 border-y-[6px] border-y-transparent border-r-[6px] border-r-[#c8c6c4]" />
              <span className="ml-[22px] mb-[4px] w-0 h-0 border-y-[6px] border-y-transparent border-l-[6px] border-l-[#c8c6c4]" />
              <span className="absolute left-[13px] top-[35px] w-[30px] h-[3px] rounded-full bg-[#117865]" />
            </div>
            <div className="w-[94px] shrink-0 bg-white border-b-[5px] border-[#117865] pt-[3px] flex items-center justify-center text-[14.500px]">Page 1</div>
            <div className="ml-px w-[49px] shrink-0 bg-[#117865] flex items-center justify-center">
              <Plus size={18} strokeWidth={3.4} color="#fff" />
            </div>
          </div>
        </div>

        {/* side panes */}
        <div className="w-[44px] shrink-0 bg-[#f3f2f1] border-x border-[#d2d0ce] flex flex-col items-center">
          <ChevronsLeft size={24} strokeWidth={1.3} className="mt-[12px]" />
          <span className="mt-[16px] [writing-mode:vertical-rl] text-[18.500px] font-medium text-[#252423]">Visualizations</span>
        </div>
        <div className="w-[41px] shrink-0 bg-[#f3f2f1] flex flex-col items-center">
          <ChevronsLeft size={24} strokeWidth={1.3} className="mt-[12px]" />
          <span className="mt-[16px] [writing-mode:vertical-rl] text-[19px] font-medium text-[#252423]">Data</span>
        </div>
      </div>

      {/* status bar */}
      <div className="h-[29px] shrink-0 bg-[#f3f2f1] border-t border-[#e1dfdd] flex items-center text-[#605e5c] text-[14px]">
        <span className="ml-[5px]">Page 1 of 1</span>
        <span className="ml-auto font-bold">-</span>
        <div className="ml-[5px] w-[125px] h-px bg-[#605e5c] relative">
          <span className="absolute left-[48px] -top-[6px] w-[5px] h-[13px] bg-[#605e5c]" />
          <span className="absolute left-[62px] -top-[3px] w-px h-[7px] bg-[#605e5c]" />
        </div>
        <Plus size={13} strokeWidth={2} className="ml-[5px]" />
        <span className="ml-[16px]">82%</span>
        <div className="ml-[24px] mr-[21px] w-[20px] h-[20px] border-2 border-[#a19f9d] relative">
          <span className="absolute inset-[2px] border border-dashed border-[#605e5c]" />
        </div>
      </div>

      {/* taskbar */}
      <div className="flex-1 pb-[2px] border-t border-black bg-[linear-gradient(90deg,#e5eef8_0%,#d5e3f9_35%,#d4dcf3_60%,#e2eef8_100%)] flex items-center text-[#1b1b1b] relative">
        <div className="ml-[25px] relative w-[30px] h-[28px]">
          <span className="absolute left-[2px] top-[3px] w-[24px] h-[26px] rounded-full bg-[#f59a0c]" />
          <span className="absolute left-0 top-[9px] w-[12px] h-[3px] bg-[#6b6b6b]" />
          <span className="absolute left-0 top-[15px] w-[26px] h-[3px] bg-[#6b6b6b]" />
          <span className="absolute left-0 top-[21px] w-[22px] h-[3px] bg-[#6b6b6b]" />
          <span className="absolute left-[14px] -top-[10px] w-[20px] h-[20px] rounded-full bg-[#c42b1c] text-white text-[12px] font-semibold flex items-center justify-center">1</span>
        </div>
        <div className="ml-[10px] mt-[3px] text-[13px] leading-[21px]">
          <div>30°C</div>
          <div className="text-[#5a5a5a]">Haze</div>
        </div>
        <div className="ml-[519px] mt-[1px]"><WinLogo /></div>
        <div className="ml-[17px] w-[274px] h-[38px] rounded-full bg-[#f2f6fd] border border-[#c5d0e4] flex items-center text-[#5f5f5f] text-[16px]">
          <Search size={19} color="#1b1b1b" strokeWidth={2} className="ml-[13px]" />
          <span className="ml-[11px]">Search</span>
        </div>
        <div className="ml-[15px] relative w-[30px] h-[32px]">
          <span className="absolute left-0 bottom-0 w-[22px] h-[20px] rounded-[2px] bg-[#222]" />
          <span className="absolute right-0 top-0 w-[22px] h-[22px] rounded-[2px] bg-[#e9e9e9]/80 border border-white" />
        </div>
        <div className="ml-[26px]"><Chrome /></div>
        <div className="ml-[25px]"><Edge /></div>
        <div className="ml-[25px]"><Store /></div>
        <div className="ml-[24px] relative">
          <Folder />
          <span className="absolute left-[11px] -bottom-[7px]"><TrayDot /></span>
        </div>
        <div className="ml-[17px] w-[48px] h-[48px] rounded-[4px] bg-[#ecf1fb] flex flex-col items-center pt-[9px] relative">
          <PowerBi />
          <span className="absolute bottom-[1px] left-[14px]"><TrayDot blue /></span>
        </div>
        <div className="ml-[18px] relative">
          <Photos />
          <span className="absolute left-[9px] -bottom-[7px]"><TrayDot /></span>
        </div>
        <svg className="ml-[197px]" width="14" height="9" viewBox="0 0 14 9" fill="none" stroke="#1b1b1b" strokeWidth="1.6"><path d="M1 8l6-6 6 6" /></svg>
        <svg className="ml-[21px]" width="22" height="22" viewBox="0 0 22 22" fill="none" stroke="#1b1b1b" strokeWidth="1.4">
          <path d="M5 18a4 4 0 0 1 0-8 6 6 0 0 1 11-2 5 5 0 0 1 1 10zM3 2l16 19" />
        </svg>
        <div className="ml-[22px] mt-[3px] w-[30px] text-center text-[13px] leading-[21px]">
          <div>ENG</div>
          <div>IN</div>
        </div>
        <svg className="ml-[23px]" width="20" height="20" viewBox="0 0 20 20" fill="none" stroke="#1b1b1b" strokeWidth="1.2">
          <circle cx="10" cy="10" r="9" />
          <path d="M1 10h18M10 1c-6 5-6 13 0 18M10 1c6 5 6 13 0 18" />
          <circle cx="14" cy="14" r="5" fill="#e0eaf8" />
          <path d="M11 17l6-6" />
        </svg>
        <Volume2 size={20} strokeWidth={1.3} className="ml-[10px]" />
        <svg className="ml-[10px]" width="20" height="14" viewBox="0 0 20 14" fill="none" stroke="#1b1b1b" strokeWidth="1.4">
          <rect x="1" y="1" width="16" height="12" rx="3" />
          <rect x="3" y="3.500" width="4" height="7" fill="#1b1b1b" stroke="none" />
          <path d="M19 5v4" />
        </svg>
        <div className="ml-auto mt-[3px] text-[13px] leading-[21px] text-right whitespace-nowrap">
          <div>15:07</div>
          <div>18-09-2024</div>
        </div>
        <Bell size={18} fill="#0b3d91" color="#0b3d91" className="ml-[11px] shrink-0" />
        <div className="ml-[21px] mr-[23px] relative w-[30px] h-[34px] shrink-0">
          <Copilot size={30} />
          <span className="absolute left-[8px] top-[20px] px-[2px] rounded-[2px] bg-[#f5c518] text-[8px] font-bold leading-[12px] text-[#222]">PRE</span>
        </div>
      </div>
    </div>
  );
}
